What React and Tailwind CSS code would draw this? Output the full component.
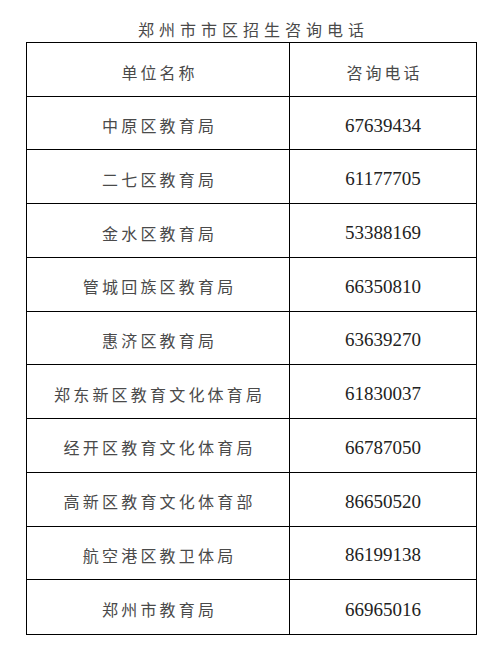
const ROWS = [
  ["中原区教育局", "67639434"],
  ["二七区教育局", "61177705"],
  ["金水区教育局", "53388169"],
  ["管城回族区教育局", "66350810"],
  ["惠济区教育局", "63639270"],
  ["郑东新区教育文化体育局", "61830037"],
  ["经开区教育文化体育局", "66787050"],
  ["高新区教育文化体育部", "86650520"],
  ["航空港区教卫体局", "86199138"],
  ["郑州市教育局", "66965016"],
];

const cjk = { fontFamily: '"Noto Sans CJK SC", sans-serif' };
const num = { fontFamily: '"Liberation Serif", serif' };

export default function App() {
  return (
    <div className="w-[502px] h-[651px] bg-white">
      {/* title */}
      <div className="h-[42px] flex items-center justify-center pt-[15px]">
        <h1 className="text-[16px] leading-none tracking-[5px] pl-[5px] text-[#4a4a4a]" style={cjk}>
          郑州市市区招生咨询电话
        </h1>
      </div>

      {/* table */}
      <div className="ml-[26px] w-[451px] h-[593px] border border-black grid grid-rows-[repeat(11,1fr)] divide-y divide-black">
        <div className="grid grid-cols-[263px_1fr]">
          <div className="border-r border-black flex items-center justify-center pt-[6px]">
            <span className="text-[16px] leading-none tracking-[3px] pl-[3px] text-[#4a4a4a]" style={cjk}>单位名称</span>
          </div>
          <div className="flex items-center justify-center pt-[6px]">
            <span className="text-[16px] leading-none tracking-[3px] pl-[3px] text-[#4a4a4a]" style={cjk}>咨询电话</span>
          </div>
        </div>
        {ROWS.map(([name, tel]) => (
          <div key={name} className="grid grid-cols-[263px_1fr]">
            <div className="border-r border-black flex items-center justify-center pt-[4px]">
              <span className="text-[16px] leading-none tracking-[3.2px] pl-[3.2px] text-[#4a4a4a]" style={cjk}>{name}</span>
            </div>
            <div className="flex items-center justify-center pt-[4px]">
              <span className="text-[19px] leading-none text-[#222]" style={num}>{tel}</span>
            </div>
          </div>
        ))}
      </div>
    </div>
  );
}
